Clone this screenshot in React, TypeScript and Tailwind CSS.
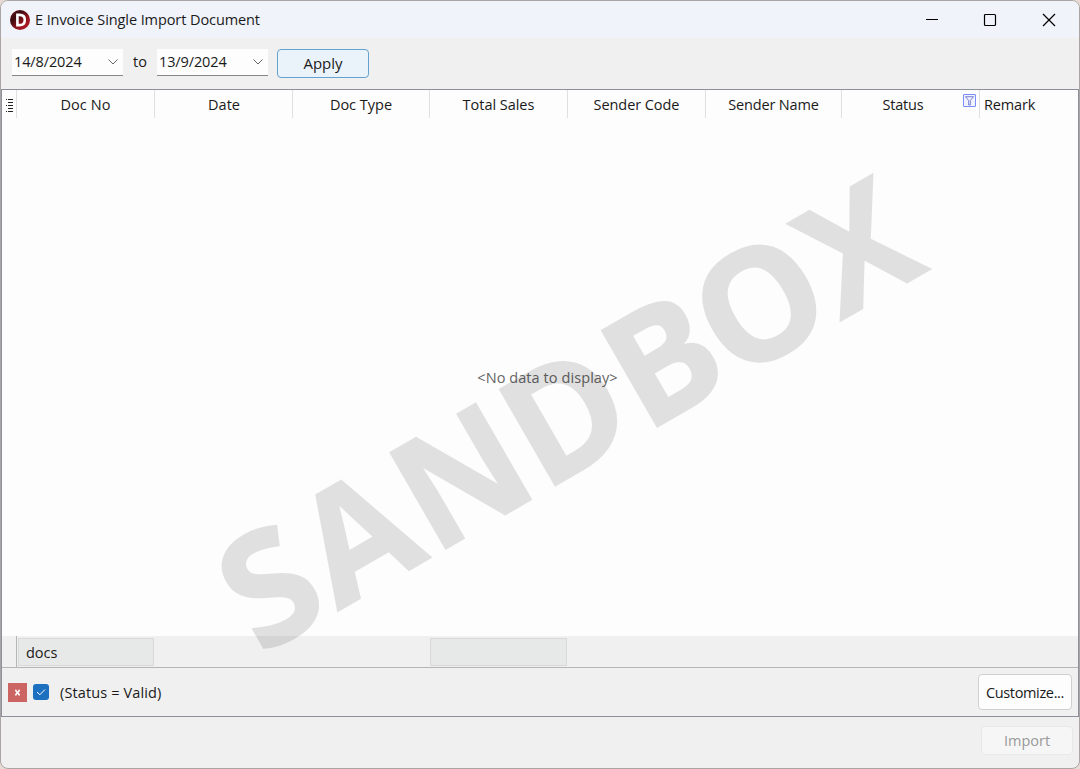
import React from "react";

type Column = { label: string; width: string; spacing: string };

const columns: Column[] = [
  { label: "Doc No", width: "w-[138px]", spacing: "tracking-[0.1px]" },
  { label: "Date", width: "w-[138px]", spacing: "pl-[1px] tracking-[0px]" },
  { label: "Doc Type", width: "w-[137px]", spacing: "tracking-[0px]" },
  { label: "Total Sales", width: "w-[138px]", spacing: "tracking-[-0.03px]" },
  { label: "Sender Code", width: "w-[138px]", spacing: "tracking-[-0.07px]" },
  { label: "Sender Name", width: "w-[136px]", spacing: "tracking-[-0.17px]" },
];

function Logo() {
  return (
    <svg width="20" height="20" viewBox="0 0 20 20">
      <defs>
        <linearGradient id="logo" x1="0" y1="0" x2="1" y2="1">
          <stop offset="0" stopColor="#7d151d" />
          <stop offset="0.3" stopColor="#3a0b0f" />
          <stop offset="0.6" stopColor="#8d121b" />
          <stop offset="1" stopColor="#c4202b" />
        </linearGradient>
      </defs>
      <circle cx="10" cy="10" r="10" fill="url(#logo)" />
      <path d="M7.4 4.9h2.1c3.4 0 5.3 1.9 5.3 5s-1.9 5.2-5.3 5.2H7.4z" fill="none" stroke="#fff" strokeWidth="2.6" />
    </svg>
  );
}

function DateBox({ value }: { value: string }) {
  return (
    <div className="flex h-[27px] w-[111px] items-center justify-between border-b border-[#868686] bg-[#fdfdfd] pr-[5px] pl-[2px]">
      <span className="text-[14.5px] tracking-[-0.12px]">{value}</span>
      <svg width="10" height="6" viewBox="0 0 10 6" fill="none" stroke="#666" strokeWidth="1">
        <path d="M0.5 0.5 5 5 9.5 0.5" />
      </svg>
    </div>
  );
}

function Watermark() {
  return (
    <svg className="pointer-events-none absolute top-0 left-0" width="1080" height="769" viewBox="0 0 1080 769">
      <text
        transform="rotate(-30)"
        x="-102.5 -12.7 97.8 224.2 342 444 567.3"
        y="698.2"
        fontSize="155.5"
        fontWeight="700"
        fontFamily="'Open Sans', 'Noto Sans', sans-serif"
        fill="#000"
        stroke="#000"
        strokeWidth="1.8"
        opacity="0.11"
      >
        SANDBOX
      </text>
    </svg>
  );
}

export default function App() {
  return (
    <div className="relative h-[769px] w-[1080px] overflow-hidden bg-[#e6dcd5] font-['Open_Sans','Noto_Sans',sans-serif] text-[14.5px] leading-[20px] text-[#1a1a1a]">
      <div className="flex h-full w-full flex-col overflow-hidden rounded-[8px] border border-[#aaa5a2] bg-[#f0f0f0]">
        <header className="flex h-[37px] shrink-0 items-center bg-[#f0f3fa] pl-[9px]">
          <Logo />
          <h1 className="ml-[5px] text-[14.5px] tracking-[-0.09px] whitespace-nowrap">E Invoice Single Import Document</h1>
          <div className="ml-auto flex items-center pr-[22px] text-black">
            <svg width="132" height="14" viewBox="0 0 132 14" fill="none" stroke="currentColor" strokeWidth="1.2">
              <path d="M1 6.5h12" strokeWidth="1" />
              <rect x="59.5" y="1.5" width="11" height="11" rx="1" />
              <path d="m118 1 12 12m0-12-12 12" />
            </svg>
          </div>
        </header>

        <section className="flex h-[51px] shrink-0 items-start pt-[11px] pl-[11px]">
          <DateBox value="14/8/2024" />
          <span className="mt-[3px] w-[34px] text-center">to</span>
          <DateBox value="13/9/2024" />
          <button className="ml-[9px] h-[29px] w-[92px] rounded-[4px] border border-[#64a2d0] bg-[#ebf3fa] pb-[2px] text-[15px]">
            Apply
          </button>
        </section>

        <main className="flex h-[628px] shrink-0 flex-col border border-[#8d8f9c]">
          <div className="flex h-[28px] shrink-0 bg-[#fdfdfd]">
            <div className="flex w-[15px] shrink-0 items-start border-r border-[#e0e0e0] pt-[9px] pl-[4px]">
              <svg width="7" height="13" viewBox="0 0 7 13" shapeRendering="crispEdges" stroke="#222">
                <path d="M0 .5h1M0 6.5h1M0 12.5h1M2 .5h5M2 3.5h5M2 6.5h5M2 9.5h5M2 12.5h5" />
              </svg>
            </div>
            {columns.map((c) => (
              <div key={c.label} className={`${c.width} ${c.spacing} shrink-0 border-r border-[#e0e0e0] pt-[5px] text-center`}>
                {c.label}
              </div>
            ))}
            <div className="flex w-[138px] shrink-0 border-r border-[#e0e0e0] pt-[4px]">
              <span className="w-[121px] pt-[1px] pl-[1px] text-center tracking-[-0.2px]">Status</span>
              <svg width="13" height="13" viewBox="0 0 13 13" fill="none" stroke="#7b8cff">
                <rect x=".5" y=".5" width="12" height="12" rx=".5" fill="#f1f3ff" />
                <path d="M2.5 2.7h8L7.3 6.5v4.5h-1.6V6.5z" stroke="#6d74cf" strokeWidth=".9" />
              </svg>
            </div>
            <span className="pt-[5px] pl-[4px] tracking-[-0.15px]">Remark</span>
          </div>

          <div className="flex h-[518px] shrink-0 items-center justify-center bg-[#fdfdfd] pt-[2px] pl-[15px] text-[#666]">
            <span className="tracking-[0.08px]">&lt;No data to display&gt;</span>
          </div>

          <div className="flex h-[32px] shrink-0 border-b border-[#b5b5b5]">
            <div className="w-[15px] shrink-0 border-r border-[#b5b5b5]" />
            <div className="mt-[2px] ml-[1px] h-[28px] w-[136px] border border-[#d8dada] bg-[#e7e9e8] pt-[4px] pl-[7px]">docs</div>
            <div className="mt-[2px] ml-[276px] h-[28px] w-[137px] border border-[#d8dada] bg-[#e7e9e8]" />
          </div>

          <div className="flex h-[48px] shrink-0 items-center pr-[6px] pl-[6px]">
            <svg className="mt-px" width="19" height="19" viewBox="0 0 19 19">
              <rect width="19" height="19" fill="#cc6464" />
              <path d="m7.4 7.2 4.2 4.8m0-4.8-4.2 4.8" stroke="#fff" strokeWidth="1.6" />
              <path d="M7 7.2h1.6m1.8 0H12M7 12h1.6m1.8 0H12" stroke="#fff" strokeWidth=".8" />
            </svg>
            <svg className="ml-[6px]" width="16" height="16" viewBox="0 0 16 16" fill="none">
              <rect width="16" height="16" rx="3" fill="#1d6fbf" />
              <path d="m4 8 2.8 2.8L12 5.5" stroke="#fff" />
            </svg>
            <span className="mt-[2px] ml-[11px] tracking-[0.12px]">(Status = Valid)</span>
            <button className="ml-auto h-[36px] w-[94px] rounded-[4px] border border-[#d0d0d0] bg-[#fdfdfd] pt-px tracking-[-0.35px]">
              Customize...
            </button>
          </div>
        </main>

        <footer className="flex flex-1 items-start justify-end pt-[9px] pr-[6px]">
          <button className="h-[29px] w-[92px] rounded-[4px] border border-[#e8e8e8] bg-[#f6f6f6] text-[#999]">Import</button>
        </footer>
      </div>
      <Watermark />
    </div>
  );
}
